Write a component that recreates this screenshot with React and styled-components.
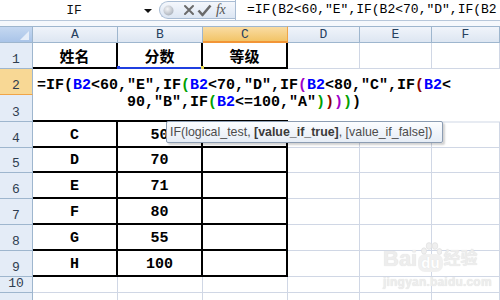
import styled, { createGlobalStyle } from 'styled-components';

const MONO = `"Liberation Mono", "Noto Sans CJK SC", monospace`;

const GlobalStyle = createGlobalStyle`
  html, body { margin: 0; padding: 0; background: #fff; }
  body { font-family: "Liberation Sans", Arial, sans-serif; }
`;

const COLS = [
  { key: 'A', w: 85 },
  { key: 'B', w: 85 },
  { key: 'C', w: 85, on: true },
  { key: 'D', w: 72 },
  { key: 'E', w: 72 },
  { key: 'F', w: 68 },
];

// row heights: header, 1..11
const HEIGHTS = [17, 26, 26, 27, 26, 25, 26, 26, 26, 26, 16, 20];

const ROWS = [
  { n: 1, cells: ['姓名', '分数', '等级'] },
  { n: 2, edit: true },
  { n: 3, edit: true },
  { n: 4, cells: ['C', '50', ''] },
  { n: 5, cells: ['D', '70', ''] },
  { n: 6, cells: ['E', '71', ''] },
  { n: 7, cells: ['F', '80', ''] },
  { n: 8, cells: ['G', '55', ''] },
  { n: 9, cells: ['H', '100', ''] },
  { n: 10 },
  { n: 11, hideLabel: true },
];

const Page = styled.div`
  position: relative;
  width: 500px;
  height: 300px;
  overflow: hidden;
  background: #fff;
`;

/* ---------- formula bar ---------- */
const FormulaBar = styled.div`
  display: flex;
  height: 21px;
  border-bottom: 1px solid #b7c7da;
  box-sizing: border-box;
  background: #fff;
`;

const NameBox = styled.div`
  width: 159px;
  display: flex;
  align-items: center;
  font: 13px ${MONO};
  color: #111;
  span { flex: 1; text-align: center; padding-left: 4px; }
`;

const DropArrow = styled.i`
  width: 0;
  height: 0;
  margin: 2px 7px 0 0;
  border-left: 4px solid transparent;
  border-right: 4px solid transparent;
  border-top: 4px solid #111;
`;

const Pill = styled.div`
  width: 76px;
  height: 18px;
  margin-top: 1px;
  box-sizing: border-box;
  border: 1px solid #a9bcd3;
  border-right: none;
  border-radius: 9px 0 0 9px;
  background: linear-gradient(#f4f7fc, #dce6f3);
  display: flex;
  align-items: center;
  padding-left: 3px;
  svg { flex: none; }
`;

const IconSlot = styled.span`
  display: flex;
  margin-left: ${(p) => p.$gap}px;
`;

const Fx = styled.i`
  font: italic 14px "Liberation Serif", serif;
  color: #555;
  margin-left: 4px;
  letter-spacing: -0.5px;
`;

const FormulaText = styled.div`
  flex: 1;
  border-left: 1px solid #a9bcd3;
  padding-left: 11px;
  font: 13px ${MONO};
  line-height: 20px;
  white-space: nowrap;
  overflow: hidden;
  color: #000;
`;

const Strip = styled.div`
  height: 5px;
  background: #f5f8fc;
`;

/* ---------- sheet ---------- */
const Sheet = styled.div`
  display: grid;
  grid-template-columns: 33px ${COLS.map((c) => c.w + 'px').join(' ')};
  grid-template-rows: ${HEIGHTS.map((h) => h + 'px').join(' ')};
`;

const Corner = styled.div`
  position: relative;
  box-sizing: border-box;
  border-top: 1px solid #9eb6ce;
  border-right: 1px solid #9eb6ce;
  border-bottom: 1px solid #9eb6ce;
  background: linear-gradient(#c5d8f1, #a9c4e8);
  &::after {
    content: '';
    position: absolute;
    right: 3px;
    bottom: 2px;
    border-left: 9px solid transparent;
    border-bottom: 9px solid #e6eef9;
  }
`;

const ColHead = styled.div`
  box-sizing: border-box;
  border-top: 1px solid #9eb6ce;
  border-right: 1px solid ${(p) => (p.$on ? '#f0a548' : '#9eb6ce')};
  border-bottom: ${(p) => (p.$on ? '2px solid #f29536' : '1px solid #9eb6ce')};
  background: ${(p) =>
    p.$on ? 'linear-gradient(#f9dca3, #f2c467)' : 'linear-gradient(#f0f4fa, #dde6f2)'};
  display: flex;
  align-items: center;
  justify-content: center;
  font: 13px ${MONO};
  color: #27415f;
`;

const RowHead = styled.div`
  box-sizing: border-box;
  border-right: 1px solid #9eb6ce;
  border-bottom: 1px solid ${(p) => (p.$on ? '#f0a548' : '#9eb6ce')};
  background: ${(p) => (p.$on ? '#f8d895' : '#e4ecf7')};
  display: flex;
  align-items: flex-end;
  justify-content: center;
  padding-bottom: 1px;
  font: 13px ${MONO};
  color: #2f3d4f;
`;

const Cell = styled.div`
  box-sizing: border-box;
  border-right: ${(p) => (p.$ruled ? '2px solid #000' : '1px solid #d0d7e5')};
  border-bottom: ${(p) => (p.$ruled ? '2px solid #000' : '1px solid #d0d7e5')};
  display: flex;
  align-items: center;
  justify-content: center;
  padding-top: 2px;
  font: bold 15px ${MONO};
  color: #000;
`;

const EditBox = styled.div`
  grid-row: 3 / 5;
  grid-column: 2 / 8;
  position: relative;
  background: #fff;
  padding: 8px 45px 0 0;
  font: bold 15px ${MONO};
  line-height: 17px;
  color: #000;
  &::after {
    content: '';
    position: absolute;
    left: 0;
    bottom: 0;
    width: 255px;
    height: 2px;
    background: #000;
    box-shadow: 255px 1px 0 -0.5px #d0d7e5;
  }
`;

const Line = styled.div`
  text-align: center;
  white-space: pre;
`;

const Ref = styled.span`
  color: #0000ff;
`;

const Paren = styled.span`
  color: ${(p) => p.$c};
`;

const RangeMark = styled.div`
  position: absolute;
  top: -2px;
  left: 85px;
  width: 85px;
  height: 2px;
  background: #1f3fe0;
  &::before, &::after {
    content: '';
    position: absolute;
    top: -1px;
    width: 3px;
    height: 3px;
  }
  &::before { left: -1px; background: #1f3fe0; }
  &::after { right: -1px; background: #e8d84a; }
`;

/* ---------- overlays ---------- */
const Tip = styled.div`
  position: absolute;
  left: 166px;
  top: 121px;
  width: 277px;
  height: 22px;
  box-sizing: border-box;
  border: 1px solid #8c9db3;
  border-radius: 2px;
  background: linear-gradient(#fcfdff, #e6edf6);
  box-shadow: 2px 2px 2px rgba(0, 0, 0, 0.18);
  padding-left: 3px;
  font: 12.4px "Liberation Sans", Arial, sans-serif;
  line-height: 20px;
  color: #4c4c4c;
  white-space: nowrap;
  b { color: #3a3a3a; }
`;

const Watermark = styled.div`
  position: absolute;
  left: 383px;
  top: 246px;
  color: #ededed;
  text-shadow: 0 0 1px #dadada;
  font-family: "Liberation Sans", "Noto Sans CJK SC", sans-serif;
  pointer-events: none;
`;

const MarkTop = styled.div`
  display: flex;
  align-items: flex-end;
  font-size: 22px;
  font-weight: bold;
  line-height: 26px;
  span.cn { font-size: 17px; margin-left: 1px; }
`;

const Du = styled.span`
  position: relative;
  display: inline-block;
  font-size: 15px;
  line-height: 18px;
  padding: 0 3px;
  margin-left: 1px;
  background: #f0f0f0;
  border-radius: 7px;
  color: #fff;
  svg { position: absolute; left: 2px; top: -12px; }
`;

const MarkSub = styled.div`
  font-size: 12px;
  font-weight: bold;
  letter-spacing: 0.2px;
  margin-top: 3px;
`;

function CloseIcon() {
  return (
    <svg width="12" height="12" viewBox="0 0 12 12">
      <path d="M2 2 L10 10 M10 2 L2 10" stroke="#6a6a6a" strokeWidth="2" strokeLinecap="round" />
    </svg>
  );
}

function CheckIcon() {
  return (
    <svg width="15" height="13" viewBox="0 0 15 13">
      <path d="M1.5 6.5 L5.5 11 L13.5 1.5" stroke="#6a6a6a" strokeWidth="2.6" fill="none" strokeLinejoin="round" />
    </svg>
  );
}

function Dot() {
  return (
    <svg width="11" height="11" viewBox="0 0 11 11">
      <defs>
        <radialGradient id="dotg" cx="0.4" cy="0.35" r="0.7">
          <stop offset="0" stopColor="#f4f5f7" />
          <stop offset="1" stopColor="#a9b0ba" />
        </radialGradient>
      </defs>
      <circle cx="5.5" cy="5.5" r="5" fill="url(#dotg)" />
    </svg>
  );
}

function Paw() {
  return (
    <svg width="22" height="14" viewBox="0 0 22 14">
      <g fill="#efefef" stroke="#dedede" strokeWidth="0.6">
        <ellipse cx="4" cy="9" rx="2.6" ry="3.2" />
        <ellipse cx="9" cy="4" rx="2.8" ry="3.4" />
        <ellipse cx="15" cy="4" rx="2.8" ry="3.4" />
        <ellipse cx="19.5" cy="9.5" rx="2.4" ry="3" />
      </g>
    </svg>
  );
}

const GREEN = '#00a000';
const PURPLE = '#a000c8';
const BROWN = '#8b0000';

function Formula() {
  return (
    <>
      <Line>
        =IF(<Ref>B2</Ref>{'<60,"E",IF'}
        <Paren $c={GREEN}>(</Paren>
        <Ref>B2</Ref>{'<70,"D",IF'}
        <Paren $c={PURPLE}>(</Paren>
        <Ref>B2</Ref>{'<80,"C",IF'}
        <Paren $c={BROWN}>(</Paren>
        <Ref>B2</Ref>{'<'}
      </Line>
      <Line>
        {'90,"B",IF'}
        <Paren $c={GREEN}>(</Paren>
        <Ref>B2</Ref>{'<=100,"A"'}
        <Paren $c={GREEN}>)</Paren>
        <Paren $c={BROWN}>)</Paren>
        <Paren $c={PURPLE}>)</Paren>
        <Paren $c={GREEN}>)</Paren>)
      </Line>
    </>
  );
}

export default function App() {
  return (
    <Page>
      <GlobalStyle />
      <FormulaBar>
        <NameBox>
          <span>IF</span>
          <DropArrow />
        </NameBox>
        <Pill>
          <Dot />
          <IconSlot $gap={9}><CloseIcon /></IconSlot>
          <IconSlot $gap={2}><CheckIcon /></IconSlot>
          <Fx>fx</Fx>
        </Pill>
        <FormulaText>=IF(B2&lt;60,"E",IF(B2&lt;70,"D",IF(B2</FormulaText>
      </FormulaBar>
      <Strip />
      <Sheet>
        <Corner />
        {COLS.map((c) => (
          <ColHead key={c.key} $on={c.on}>{c.key}</ColHead>
        ))}
        {ROWS.map((r) => [
          <RowHead key={'h' + r.n} $on={r.n === 2}>{r.hideLabel ? '' : r.n}</RowHead>,
          r.edit
            ? null
            : COLS.map((c, i) => (
                <Cell key={r.n + c.key} $ruled={!!r.cells && i < 3}>
                  {r.cells ? r.cells[i] : ''}
                </Cell>
              )),
        ])}
        <EditBox>
          <RangeMark />
          <Formula />
        </EditBox>
      </Sheet>
      <Tip>
        IF(logical_test, <b>[value_if_true]</b>, [value_if_false])
      </Tip>
      <Watermark>
        <MarkTop>
          Bai
          <Du>
            <Paw />
            du
          </Du>
          <span className="cn">经验</span>
        </MarkTop>
        <MarkSub>jingyan.baidu.com</MarkSub>
      </Watermark>
    </Page>
  );
}
